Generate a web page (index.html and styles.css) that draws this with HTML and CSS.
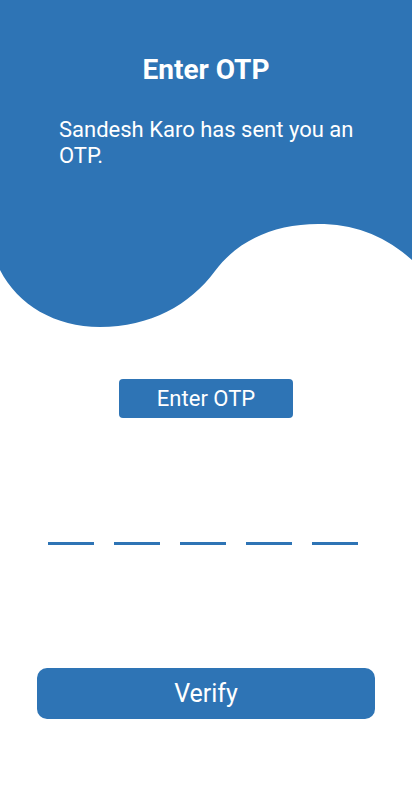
FILE: index.html
```html
<!DOCTYPE html>
<html>
<head>
<meta charset="utf-8">
<link rel="stylesheet" href="styles.css">
</head>
<body>
<div class="screen">
  <header class="hero">
    <svg class="hero-bg" width="412" height="330" viewBox="0 0 412 330" aria-hidden="true">
      <path d="M0 0 H412 V260 C385 236 355 224 318 224 C275 224 238 240 215 271 C190 305 150 327 100 327 C55 327 18 305 0 270 Z" fill="#2e74b5"/>
    </svg>
    <h1 class="title">Enter OTP</h1>
    <p class="subtitle">Sandesh Karo has sent you an OTP.</p>
  </header>
  <div class="label-wrap"><div class="label">Enter OTP</div></div>
  <div class="otp">
    <span class="slot"></span><span class="slot"></span><span class="slot"></span><span class="slot"></span><span class="slot"></span>
  </div>
  <div class="verify-wrap"><button class="verify">Verify</button></div>
</div>
</body>
</html>
```
FILE: styles.css
```css
* { box-sizing: border-box; }
html, body { margin: 0; padding: 0; background: #fff; }
body { font-family: Roboto, "Noto Sans", sans-serif; width: 412px; height: 796px; overflow: hidden; }
.screen { display: flex; flex-direction: column; }
.hero { position: relative; z-index: 0; height: 330px; color: #fff; padding-top: 54px; }
.hero-bg { position: absolute; left: 0; top: 0; z-index: -1; }
.title { margin: 0; text-align: center; font-size: 28px; font-weight: 700; line-height: 32px; }
.subtitle { margin: 31px 0 0 59px; width: 310px; font-size: 22px; line-height: 26px; }
.label-wrap { display: flex; justify-content: center; margin-top: 49px; }
.label { width: 174px; height: 39px; background: #2e74b5; color: #fff; border-radius: 4px; font-size: 22px; display: flex; align-items: center; justify-content: center; }
.otp { display: flex; gap: 20px; margin: 124px 0 0 48px; }
.slot { width: 46px; height: 3px; background: #2e74b5; }
.verify-wrap { padding: 0 37px; margin-top: 123px; }
.verify { display: block; width: 338px; height: 51px; border: none; border-radius: 10px; background: #2e74b5; color: #fff; font-family: Roboto, sans-serif; font-size: 25px; padding: 0; }
```
